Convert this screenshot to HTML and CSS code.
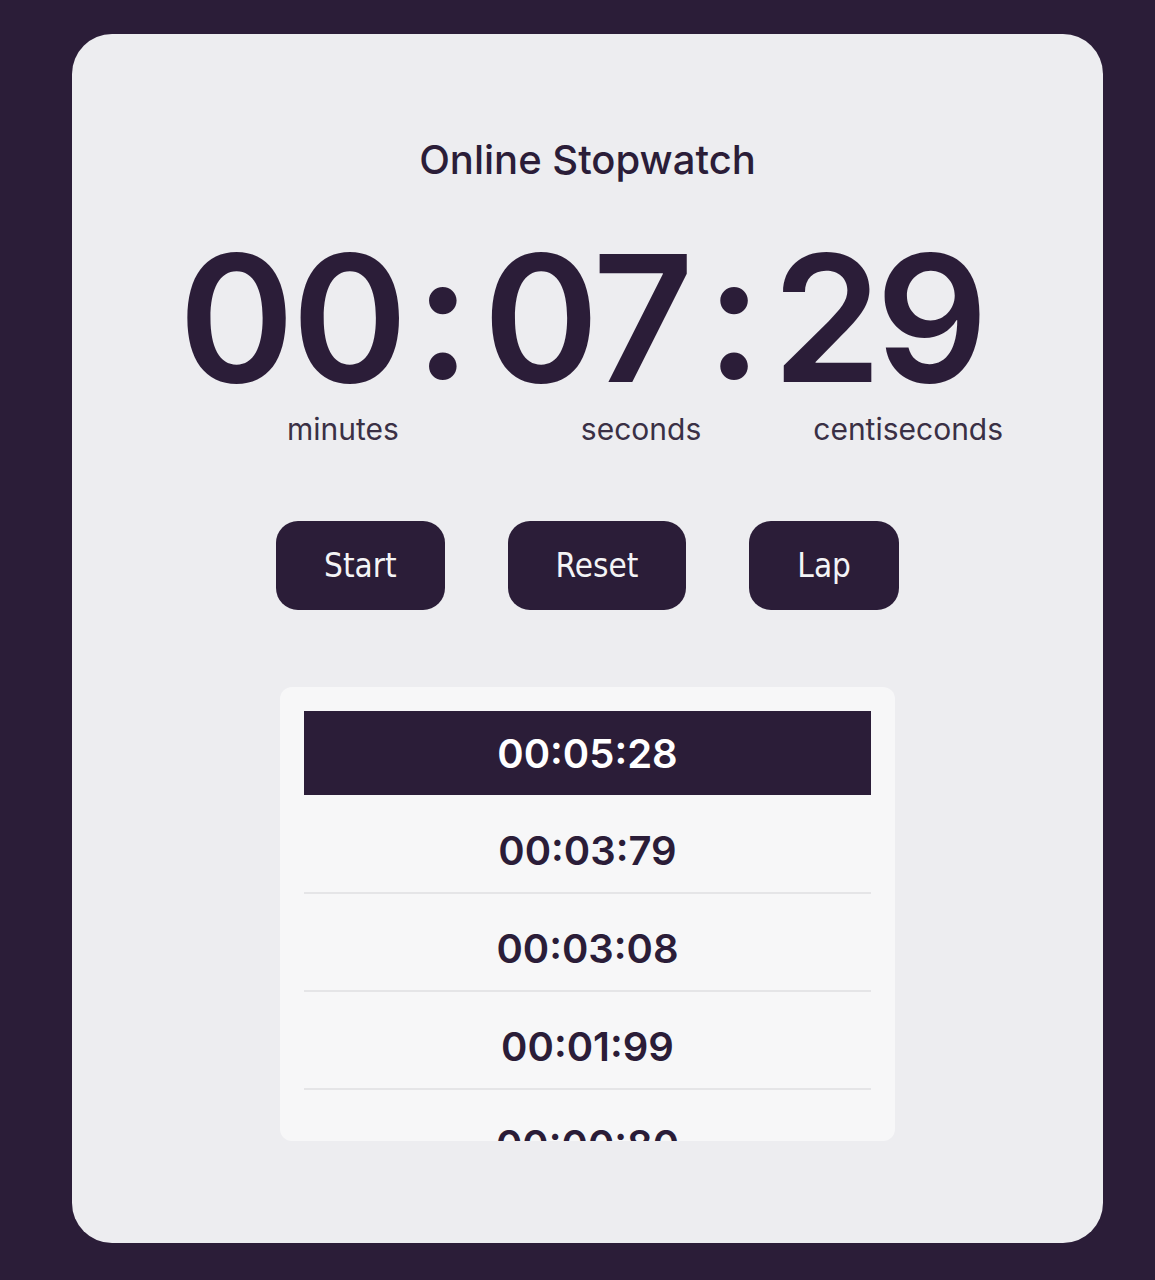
FILE: index.html
```html
<!DOCTYPE html>
<html lang="en">
<head>
<meta charset="utf-8">
<title>Online Stopwatch</title>
<link rel="stylesheet" href="styles.css">
</head>
<body>
<main class="card">
  <h1 class="title">Online Stopwatch</h1>
  <div class="clock">
    <span class="digits">00</span>
    <span class="colon">:</span>
    <span class="digits">07</span>
    <span class="colon colon-2">:</span>
    <span class="digits digits-cs">29</span>
  </div>
  <div class="labels">
    <span class="label label-min">minutes</span>
    <span class="label label-sec">seconds</span>
    <span class="label label-cs">centiseconds</span>
  </div>
  <div class="buttons">
    <button class="btn">Start</button>
    <button class="btn">Reset</button>
    <button class="btn">Lap</button>
  </div>
  <div class="laps">
    <div class="lap lap-current">00:05:28</div>
    <div class="lap">00:03:79</div>
    <div class="lap">00:03:08</div>
    <div class="lap">00:01:99</div>
    <div class="lap">00:00:80</div>
  </div>
</main>
</body>
</html>
```

FILE: styles.css
```css
html, body {
  margin: 0;
  padding: 0;
}
body {
  background: #2b1d38;
  font-family: Inter, "Noto Sans", sans-serif;
  color: #2b1d38;
  padding: 34px 52px 37px 72px;
}
.card {
  background: #ededf0;
  border-radius: 40px;
  height: 1209px;
  box-sizing: border-box;
  padding-top: 106px;
  display: flex;
  flex-direction: column;
  align-items: center;
}
.title {
  margin: 0;
  font-size: 40px;
  line-height: 1;
  font-weight: 500;
  color: #2b1d38;
}
.clock {
  margin-top: 68px;
  height: 141px;
  display: flex;
  align-items: flex-start;
  font-size: 176px;
  line-height: 0.8;
  font-weight: 600;
  letter-spacing: -3px;
  margin-left: -14px;
}
.colon {
  margin: 0 15px 0 10px;
  position: relative;
  top: -3px;
}
.colon-2 {
  margin-left: 15px;
  margin-right: 13px;
}
.digits-cs {
  letter-spacing: -6px;
}
.labels {
  align-self: stretch;
  display: flex;
  margin-top: 25px;
  font-size: 30px;
  line-height: 1;
  color: #3a3045;
}
.label-min { margin-left: 215px; }
.label-sec { margin-left: 182px; }
.label-cs { margin-left: 112px; }
.buttons {
  margin-top: 77px;
  display: flex;
  gap: 63px;
}
.btn {
  height: 89px;
  padding: 0 48px;
  border: none;
  border-radius: 22px;
  background: #2b1d38;
  color: #f4f4f6;
  font-family: "DejaVu Sans Condensed", "DejaVu Sans", sans-serif;
  font-stretch: condensed;
  font-size: 33px;
}
.laps {
  margin-top: 77px;
  width: 615px;
  height: 454px;
  box-sizing: border-box;
  background: #f7f7f8;
  border-radius: 12px;
  padding: 24px 24px 0;
  overflow: hidden;
}
.lap {
  height: 84px;
  display: flex;
  align-items: center;
  justify-content: center;
  font-size: 40px;
  font-weight: 600;
  color: #2b1d38;
  border-bottom: 2px solid #e5e5e7;
  margin-bottom: 12px;
}
.lap-current {
  background: #2b1d38;
  color: #ffffff;
  border-bottom-color: #f7f7f8;
  margin-bottom: 11px;
}
```
